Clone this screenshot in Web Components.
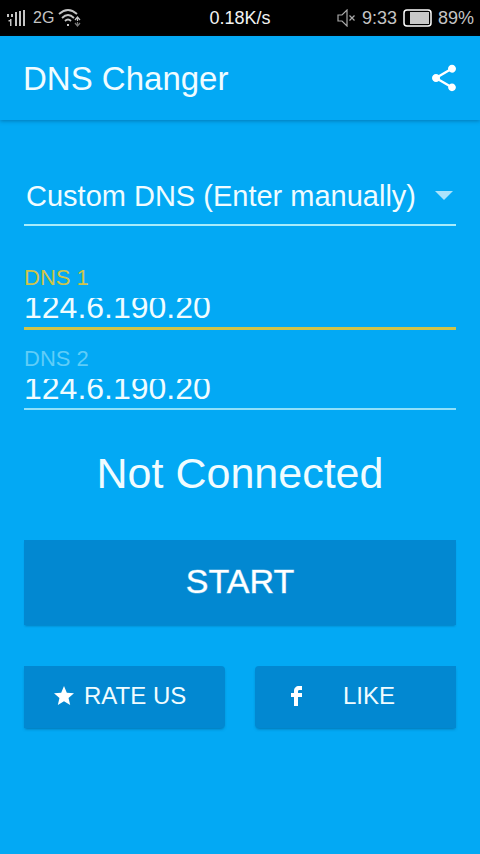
<!DOCTYPE html>
<html lang="en">
<head>
<meta charset="utf-8">
<meta name="viewport" content="width=device-width, initial-scale=1">
<title>DNS Changer</title>
<style>
  html, body { margin: 0; min-height: 100%; background: #03a9f4; }
  body { font-family: "Liberation Sans", Arial, sans-serif; color: #f0fcff; }
</style>
</head>
<body>
<dns-app></dns-app>
<script>
const define = (name, html, setup) => {
  const template = document.createElement('template');
  template.innerHTML = html;
  customElements.define(name, class extends HTMLElement {
    constructor() {
      super();
      this.attachShadow({ mode: 'open' }).append(template.content.cloneNode(true));
    }
    connectedCallback() { if (setup) setup(this, this.shadowRoot); }
  });
};

define('status-bar', `
<style>
  :host { display: grid; grid-template-columns: 1fr auto 1fr; align-items: center; height: 36px; padding: 0 6px; background: #000; color: #c4c4c4; font-size: 18px; line-height: 20px; }
  div { display: flex; align-items: center; }
  svg { display: block; flex: none; }
  .net { font-size: 16px; margin: 0 4px 0 7px; }
  .speed { color: #f2f2f2; }
  .right { justify-content: flex-end; gap: 6px; }
</style>
<div>
  <svg width="20" height="18" viewBox="0 0 20 18" fill="#c4c4c4" aria-hidden="true">
    <path d="M1 5h2v3H1zM5 5h2v3H5zM9 3h2v14H9zM13 2h2v15h-2zM17 1h2v16h-2zM4 10h1.500v7H4zM2.500 11H4v1.500H2.500z"/>
  </svg>
  <span class="net">2G</span>
  <svg width="24" height="20" viewBox="0 0 24 20" fill="none" stroke="#c4c4c4" stroke-width="1.800" aria-hidden="true">
    <path d="M1 6Q10-2 19 6M4 10q6-6 12 0M7 13q3-3 6 0"/>
    <path d="M9 16h2v2H9z" fill="#c4c4c4" stroke="none"/>
    <path d="M17 12l2.500-3 2.500 3M19.500 9v4" stroke-width="1.200"/>
    <path d="M17 15l2.500 3 2.500-3M19.500 14v4" stroke="#777" stroke-width="1.200"/>
  </svg>
</div>
<span class="speed">0.18K/s</span>
<div class="right">
  <svg width="19" height="18" viewBox="0 0 19 18" fill="none" stroke="#aaa" stroke-width="1.200" aria-hidden="true">
    <path d="M1 6h4l5-5v16l-5-5H1zM12.500 6.500l5 5M17.500 6.500l-5 5"/>
  </svg>
  <span>9:33</span>
  <svg width="29" height="18" viewBox="0 0 29 18" aria-hidden="true">
    <rect x="1" y="1" width="27" height="16" rx="3" fill="none" stroke="#fff" stroke-width="1.500"/>
    <path d="M7 3h19v12H7z" fill="#c8c8c8"/>
  </svg>
  <span>89%</span>
</div>`);

define('app-bar', `
<style>
  :host { display: flex; align-items: center; justify-content: space-between; box-sizing: border-box; height: 84px; padding: 0 20px 0 23px; box-shadow: 0 1px 4px rgba(0,50,90,.4); }
  h1 { margin: 0; padding-top: 2px; font-size: 33px; line-height: 40px; font-weight: 400; }
  button { display: block; padding: 0; border: 0; background: none; color: #fff; }
  svg { display: block; }
</style>
<h1><slot></slot></h1>
<button type="button" aria-label="Share">
  <svg width="32" height="32" viewBox="0 0 24 24" fill="currentColor"><path d="M18 16.080c-.76 0-1.440.3-1.960.77L8.910 12.700c.05-.23.09-.46.09-.7s-.04-.47-.09-.7l7.050-4.110c.54.5 1.250.81 2.040.81 1.660 0 3-1.340 3-3s-1.340-3-3-3-3 1.340-3 3c0 .24.04.47.09.7L8.040 9.810C7.500 9.310 6.790 9 6 9c-1.660 0-3 1.340-3 3s1.340 3 3 3c.79 0 1.500-.31 2.040-.81l7.120 4.160c-.05.21-.08.43-.08.65 0 1.610 1.310 2.920 2.920 2.920s2.920-1.310 2.920-2.920-1.310-2.920-2.920-2.920z"/></svg>
</button>`);

define('dns-select', `
<style>
  :host { display: grid; align-items: center; height: 58px; border-bottom: 2px solid #a8ecfb; }
  select, svg { grid-area: 1 / 1; }
  select { appearance: none; width: 100%; height: 42px; margin: 0; padding: 2px 40px 0 2px; border: 0; outline: 0; background: none; color: inherit; font: inherit; font-size: 29px; }
  option { color: #000; }
  svg { justify-self: end; margin-right: 3px; pointer-events: none; }
</style>
<select aria-label="DNS server"><option>Custom DNS (Enter manually)</option></select>
<svg width="18" height="9" viewBox="0 0 18 9" fill="#abe3fb" aria-hidden="true"><path d="M0 0h18L9 9z"/></svg>`);

define('dns-field', `
<style>
  :host { display: grid; gap: 8px; --accent: #5fcdf8; --line: 2px solid #8fe0fa; }
  :host([active]) { --accent: #d0c448; --line: 3px solid #d0c448; }
  label { font-size: 22px; line-height: 24px; color: var(--accent); }
  div { height: 29px; overflow: hidden; border-bottom: var(--line); }
  input { display: block; width: 100%; height: 36px; margin: -9px 0 0; padding: 0; border: 0; outline: 0; background: none; color: inherit; font: inherit; font-size: 32px; line-height: 36px; }
</style>
<label for="address"></label>
<div><input id="address" type="text" inputmode="decimal"></div>`,
(host, root) => {
  root.querySelector('label').textContent = host.getAttribute('label');
  root.querySelector('input').value = host.getAttribute('value');
});

define('start-button', `
<style>
  :host { display: block; }
  button { display: block; width: 100%; height: 85px; padding: 0 0 2px; border: 0; background: #0288d1; color: #fff; font: inherit; font-size: 34px; -webkit-text-stroke: 1px rgba(255,255,255,.4); box-shadow: 0 2px 2px -1px rgba(0,60,110,.4); }
</style>
<button type="button"><slot></slot></button>`);

define('action-button', `
<style>
  :host { display: block; --corners: 0 4px 4px 0; --gap: 8px; }
  :host([wide]) { --corners: 4px 0 0 4px; --gap: 32px; }
  button { display: flex; align-items: center; gap: var(--gap); width: 100%; height: 62px; padding: 0 28px 2px; border: 0; border-radius: var(--corners); background: #0288d1; color: inherit; font: inherit; font-size: 24px; box-shadow: 0 2px 3px -1px rgba(0,60,110,.5); }
</style>
<button type="button"><slot name="icon"></slot><span><slot></slot></span></button>`);

define('dns-app', `
<style>
  :host { display: block; }
  main { padding: 46px 24px 24px; }
  form { display: grid; gap: 17px; margin-top: 40px; }
  h2 { margin: 37px 0 41px; font-size: 43px; line-height: 52px; font-weight: 400; text-align: center; }
  .actions { display: grid; grid-template-columns: 1fr 1fr; gap: 30px; margin-top: 41px; }
  svg { display: block; flex: none; color: #fff; }
</style>
<status-bar></status-bar>
<app-bar>DNS Changer</app-bar>
<main>
  <dns-select></dns-select>
  <form>
    <dns-field active label="DNS 1" value="124.6.190.20"></dns-field>
    <dns-field label="DNS 2" value="124.6.190.20"></dns-field>
  </form>
  <h2>Not Connected</h2>
  <start-button>START</start-button>
  <div class="actions">
    <action-button>
      <svg slot="icon" width="24" height="24" viewBox="0 0 24 24" fill="currentColor" aria-hidden="true"><path d="M12 17.270L18.180 21l-1.640-7.030L22 9.240l-7.190-.61L12 2 9.190 8.630 2 9.240l5.460 4.730L5.820 21z"/></svg>
      RATE US
    </action-button>
    <action-button wide>
      <svg slot="icon" width="28" height="24" viewBox="0 0 28 24" fill="currentColor" aria-hidden="true"><path d="M19 2h-3c-3 0-5 2-5 5v2H8v4h3v9h4v-9h4V9h-4V7.500c0-1 .5-1.500 1.500-1.500H19z"/></svg>
      LIKE
    </action-button>
  </div>
</main>`);
</script>
</body>
</html>
